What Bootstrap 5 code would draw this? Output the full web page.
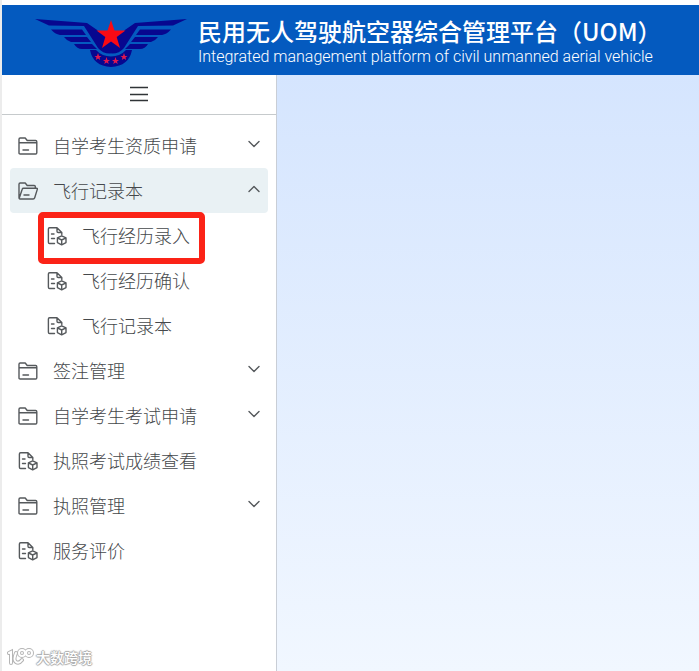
<!DOCTYPE html>
<html lang="zh-CN">
<head>
<meta charset="utf-8">
<meta name="viewport" content="width=device-width, initial-scale=1">
<title>民用无人驾驶航空器综合管理平台（UOM）</title>
<link href="https://cdn.jsdelivr.net/npm/bootstrap@5.3.0/dist/css/bootstrap.min.css" rel="stylesheet">
<style>
  body { font-family: "Liberation Sans", "Noto Sans CJK SC", sans-serif; color: #45484b; border-left: 2px solid #ececec; }
  .topbar { background: #045abf; margin-top: 5px; height: 70px; padding-left: 32px; color: #fff; }
  .emblem { width: 154px; height: 54px; }
  .brand-text { padding: 4px 0 0 10px; }
  .brand-cn { font: 500 24px/28px "Noto Sans CJK SC", sans-serif; }
  .brand-en { padding-top: 2px; font: 300 16px/20px Roboto, sans-serif; color: #fff; }
  .side { width: 275px; border-right: 1px solid #c9ced6; }
  .fold { height: 40px; padding-bottom: 2px; border: 0; border-bottom: 1px solid #c6cacc; background: #fff; }
  .menu { padding: 8px; font: 300 18px/24px "Noto Sans CJK SC", sans-serif; }
  .entry { height: 45px; padding: 0 8px 0 8px; border: 0; border-radius: 4px; background: transparent; color: inherit; font-weight: 300; text-decoration: none; gap: 15px; }
  .entry span { padding-bottom: 2px; }
  .entry.open { background: #e9f1f4; }
  .entry svg { flex: none; fill: none; stroke: #55595c; stroke-width: 1.4; stroke-linejoin: round; stroke-linecap: round; }
  .entry svg.arrow { margin-bottom: 3px; }
  .submenu .entry { padding-left: 37px; }
  .marked::after { content: ""; position: absolute; left: 28px; right: 63px; top: -1px; bottom: -6px; border: 6px solid #fb2317; border-radius: 5px; pointer-events: none; }
  .stage { background: linear-gradient(#d5e5fe, #f1f7ff); }
  .stamp { padding: 0 0 5px 5px; gap: 2px; font: 500 14px/18px "Noto Sans CJK SC", sans-serif; color: #fff; text-shadow: 1px 0 1px #aaa, -1px 0 1px #aaa, 0 1px 1px #aaa, 0 -1px 1px #aaa; }
</style>
<script src="https://cdn.jsdelivr.net/npm/bootstrap@5.3.0/dist/js/bootstrap.bundle.min.js"></script>
</head>
<body class="d-flex flex-column min-vh-100 bg-white">
<svg class="d-none" aria-hidden="true">
  <symbol id="folder" viewBox="0 0 20 20"><path d="M1 17V3.200Q1 2 2.200 2H7.200L9.200 4.500H17.600Q18.800 4.500 18.800 5.700V16.800Q18.800 18 17.600 18H2.200Q1 18 1 17ZM1 6.700H18.500M5 14H10.500"/></symbol>
  <symbol id="folder-open" viewBox="0 0 20 20"><path d="M1 16.500V3.200Q1 2 2.200 2H7.200L9.200 4.500H16.200Q17.300 4.500 17.300 5.600V7.200M1.200 17.200L4.200 8.200Q4.500 7.200 5.500 7.200H18.400Q19.700 7.200 19.300 8.400L16.700 16.800Q16.300 18 15.200 18H2Q1 18 1 16.500M6 14H11"/></symbol>
  <symbol id="doc" viewBox="0 0 20 20"><path d="M7.500 17.500H2.600Q1.400 17.500 1.400 16.300V3Q1.400 1.800 2.600 1.800H10L14.800 6.500V8.500M10 1.800V5.300Q10 6.500 11.200 6.500H14.800M4.500 8H7M4.500 12.500H7.500M14.700 9.800L19 11.900V16.600L14.700 18.800L10.400 16.600V11.900ZM10.400 11.900L14.700 14L19 11.900M14.700 14V18.800"/></symbol>
  <symbol id="down" viewBox="0 0 12 12"><path d="M1 3.500L6 8.500L11 3.500"/></symbol>
  <symbol id="up" viewBox="0 0 12 12"><path d="M1 8.500L6 3.500L11 8.500"/></symbol>
</svg>

<header class="topbar d-flex align-items-center">
  <svg class="emblem flex-shrink-0" viewBox="0 0 154 54" aria-hidden="true">
    <g fill="#07078f">
      <path d="M1 6L53 10L66 19L72 33L77 40.500Q69 41 64 35L50 13L15 12.500Z"/>
      <path d="M17 16.500H48L52 22H26Q21 21 17 16.500ZM30 24H53L57 29H37Q33 28 30 24ZM40 31H58L63 36H48Q43 36 40 31Z"/>
      <path d="M153 6L101 10L88 19L82 33L77 40.500Q85 41 90 35L104 13L139 12.500Z"/>
      <path d="M137 16.500H106L102 22H128Q133 21 137 16.500ZM124 24H101L97 29H117Q121 28 124 24ZM114 31H96L91 36H106Q111 36 114 31Z"/>
      <path d="M65 18H89V35Q77 45 65 35Z"/>
      <path d="M56 37H62Q68 43.500 77 43.500Q86 43.500 92 37H98Q95 53 77 54Q59 53 56 37Z"/>
    </g>
    <path fill="#045abf" d="M64 17L72 17.500V19H65ZM90 17L82 17.500V19H89Z"/>
    <path fill="#f90a14" d="M77 7L80.500 17.500H91.500L82.700 24L86 35L77 28.500L68 35L71.300 24L62.500 17.500H73.500Z"/>
    <g fill="#e01850">
      <path id="s" d="M64 40L65 43H67.500L65.500 44.600L66.200 47L64 45.500L61.800 47L62.500 44.600L60.500 43H63Z"/>
      <use href="#s" x="8.500" y="4"/><use href="#s" x="17.500" y="4"/><use href="#s" x="26"/>
    </g>
  </svg>
  <div class="brand-text text-nowrap">
    <div class="brand-cn">民用无人驾驶航空器综合管理平台（UOM）</div>
    <div class="brand-en">Integrated management platform of civil unmanned aerial vehicle</div>
  </div>
</header>

<div class="d-flex flex-grow-1">
  <aside class="side d-flex flex-column flex-shrink-0 bg-white">
    <button class="fold d-flex align-items-center justify-content-center" type="button" aria-label="菜单">
      <svg width="18" height="16" viewBox="0 0 18 16" stroke="#303437" stroke-width="1.3"><path d="M0 1.500H18M0 8.500H18M0 14.500H18"/></svg>
    </button>
    <nav class="menu flex-grow-1">
      <ul class="list-unstyled mb-0">
        <li><button class="entry d-flex align-items-center w-100" type="button"><svg width="20" height="20"><use href="#folder"/></svg><span>自学考生资质申请</span><svg class="arrow ms-auto" width="12" height="12"><use href="#down"/></svg></button></li>
        <li>
          <button class="entry open d-flex align-items-center w-100" type="button" aria-expanded="true"><svg width="20" height="20"><use href="#folder-open"/></svg><span>飞行记录本</span><svg class="arrow ms-auto" width="12" height="12"><use href="#up"/></svg></button>
          <ul class="submenu list-unstyled">
            <li class="marked position-relative"><a class="entry d-flex align-items-center" href="#"><svg width="20" height="20"><use href="#doc"/></svg><span>飞行经历录入</span></a></li>
            <li><a class="entry d-flex align-items-center" href="#"><svg width="20" height="20"><use href="#doc"/></svg><span>飞行经历确认</span></a></li>
            <li><a class="entry d-flex align-items-center" href="#"><svg width="20" height="20"><use href="#doc"/></svg><span>飞行记录本</span></a></li>
          </ul>
        </li>
        <li><button class="entry d-flex align-items-center w-100" type="button"><svg width="20" height="20"><use href="#folder"/></svg><span>签注管理</span><svg class="arrow ms-auto" width="12" height="12"><use href="#down"/></svg></button></li>
        <li><button class="entry d-flex align-items-center w-100" type="button"><svg width="20" height="20"><use href="#folder"/></svg><span>自学考生考试申请</span><svg class="arrow ms-auto" width="12" height="12"><use href="#down"/></svg></button></li>
        <li><a class="entry d-flex align-items-center" href="#"><svg width="20" height="20"><use href="#doc"/></svg><span>执照考试成绩查看</span></a></li>
        <li><button class="entry d-flex align-items-center w-100" type="button"><svg width="20" height="20"><use href="#folder"/></svg><span>执照管理</span><svg class="arrow ms-auto" width="12" height="12"><use href="#down"/></svg></button></li>
        <li><a class="entry d-flex align-items-center" href="#"><svg width="20" height="20"><use href="#doc"/></svg><span>服务评价</span></a></li>
      </ul>
    </nav>
    <div class="stamp d-flex align-items-center">
      <svg width="27" height="18" viewBox="0 0 27 18" fill="none" stroke-linecap="round" aria-hidden="true">
        <g stroke="#b5b5b5" stroke-width="4"><path d="M2 5L4 4V15M15 12Q12 16 9 14Q6 12 9 5"/><circle cx="15" cy="5" r="3"/><circle cx="22" cy="5" r="3"/></g>
        <g stroke="#fff" stroke-width="2"><path d="M2 5L4 4V15M15 12Q12 16 9 14Q6 12 9 5"/><circle cx="15" cy="5" r="3"/><circle cx="22" cy="5" r="3"/></g>
      </svg>
      <span>大数跨境</span>
    </div>
  </aside>
  <main class="stage flex-grow-1"></main>
</div>
</body>
</html>
